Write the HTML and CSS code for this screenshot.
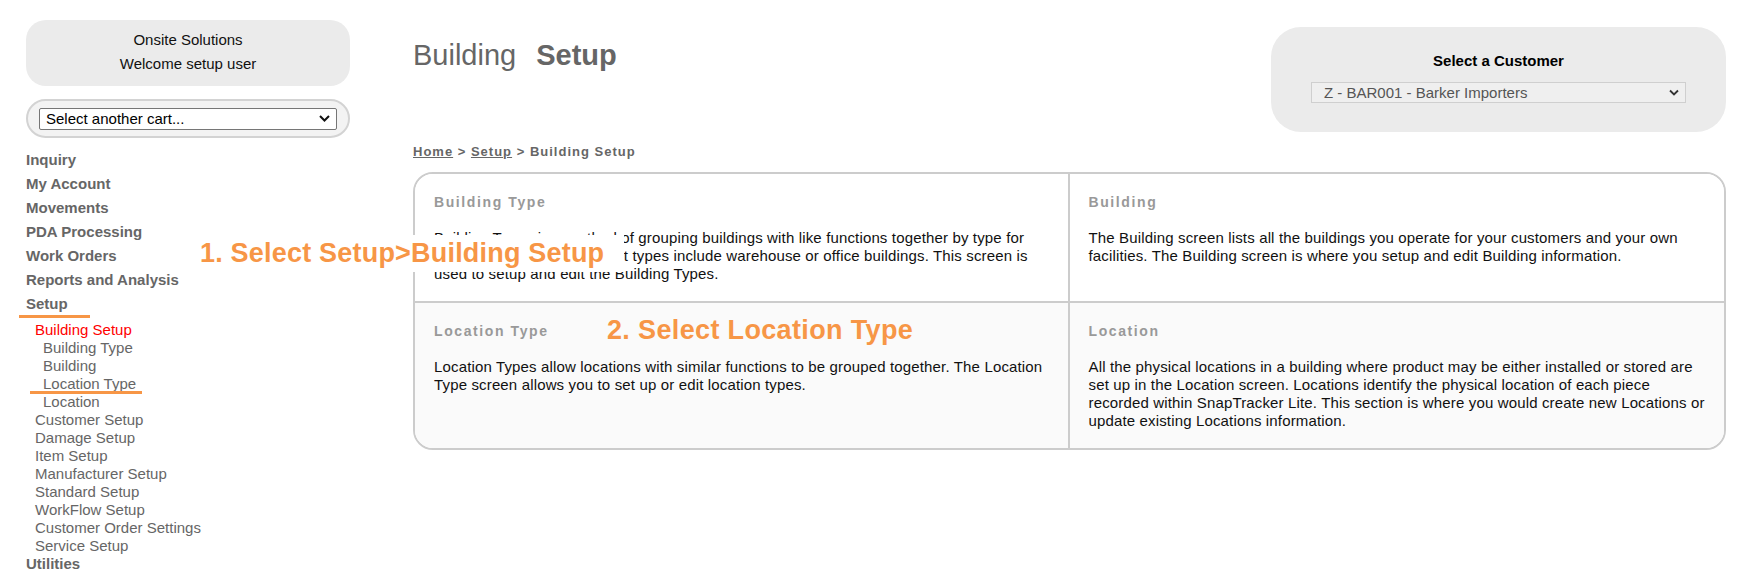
FILE: index.html
```html
<!DOCTYPE html>
<html lang="en">
<head>
<meta charset="utf-8">
<title>Building Setup</title>
<link rel="stylesheet" href="styles.css">
</head>
<body>
<div class="page">
  <aside class="sidebar">
    <div class="welcome">
      <div>Onsite Solutions</div>
      <div>Welcome setup user</div>
    </div>
    <div class="cart">
      <div class="fake-select cart-select">
        <span>Select another cart...</span>
        <svg class="chev" width="11" height="7" viewBox="0 0 11 7"><polyline points="1,1 5.5,5.5 10,1" fill="none" stroke="#111" stroke-width="2"/></svg>
      </div>
    </div>
    <nav class="nav">
      <a class="nav-item">Inquiry</a>
      <a class="nav-item">My Account</a>
      <a class="nav-item">Movements</a>
      <a class="nav-item">PDA Processing</a>
      <a class="nav-item">Work Orders</a>
      <a class="nav-item">Reports and Analysis</a>
      <a class="nav-item">Setup</a>
      <div class="sub">
        <a class="sub-item active">Building Setup</a>
        <a class="sub-item deep">Building Type</a>
        <a class="sub-item deep">Building</a>
        <a class="sub-item deep">Location Type</a>
        <a class="sub-item deep">Location</a>
        <a class="sub-item">Customer Setup</a>
        <a class="sub-item">Damage Setup</a>
        <a class="sub-item">Item Setup</a>
        <a class="sub-item">Manufacturer Setup</a>
        <a class="sub-item">Standard Setup</a>
        <a class="sub-item">WorkFlow Setup</a>
        <a class="sub-item">Customer Order Settings</a>
        <a class="sub-item">Service Setup</a>
      </div>
      <a class="nav-item last">Utilities</a>
    </nav>
  </aside>

  <main class="main">
    <div class="header">
      <h1 class="title">Building<b class="title-bold">Setup</b></h1>
      <div class="customer">
        <div class="customer-label">Select a Customer</div>
        <div class="fake-select customer-select">
          <span>Z - BAR001 - Barker Importers</span>
          <svg class="chev" width="10" height="7" viewBox="0 0 10 7"><polyline points="1,1.5 5,5.5 9,1.5" fill="none" stroke="#333" stroke-width="1.8"/></svg>
        </div>
      </div>
    </div>
    <div class="breadcrumb"><a class="crumb">Home</a> &gt; <a class="crumb">Setup</a> &gt; Building Setup</div>
    <div class="panel">
      <div class="cell top left">
        <h3 class="cell-title">Building Type</h3>
        <p class="cell-text">Building Types is a method of grouping buildings with like functions together by type for reporting purposes. Different types include warehouse or office buildings. This screen is used to setup and edit the Building Types.</p>
      </div>
      <div class="cell top">
        <h3 class="cell-title">Building</h3>
        <p class="cell-text">The Building screen lists all the buildings you operate for your customers and your own facilities. The Building screen is where you setup and edit Building information.</p>
      </div>
      <div class="cell bottom left">
        <h3 class="cell-title">Location Type</h3>
        <p class="cell-text">Location Types allow locations with similar functions to be grouped together. The Location Type screen allows you to set up or edit location types.</p>
      </div>
      <div class="cell bottom">
        <h3 class="cell-title">Location</h3>
        <p class="cell-text">All the physical locations in a building where product may be either installed or stored are set up in the Location screen. Locations identify the physical location of each piece recorded within SnapTracker Lite. This section is where you would create new Locations or update existing Locations information.</p>
      </div>
    </div>
  </main>

  <div class="ann ann1">1. Select Setup&gt;Building Setup</div>
  <div class="ann ann2">2. Select Location Type</div>
  <div class="mark mark1"></div>
  <div class="mark mark2"></div>
</div>
</body>
</html>
```
FILE: styles.css
```css
* { box-sizing: border-box; }
html, body { margin: 0; padding: 0; background: #fff; }
body {
  font-family: "Liberation Sans", Arial, sans-serif;
  font-size: 15px;
  color: #111;
}
.page {
  position: relative;
  display: flex;
  align-items: flex-start;
  padding: 0 24px 0 26px;
  width: 1750px;
  height: 576px;
  overflow: hidden;
}

/* Sidebar */
.sidebar {
  flex: none;
  width: 324px;
  padding-top: 20px;
}
.welcome {
  height: 66px;
  background: #ebebeb;
  border-radius: 20px;
  text-align: center;
  padding: 8px 0 10px;
  line-height: 24px;
  color: #111;
}
.cart {
  margin-top: 13px;
  height: 39px;
  border: 2px solid #d3d3d3;
  border-radius: 20px;
  background: #f3f3f3;
  padding: 0 11px;
  display: flex;
  align-items: center;
}
.fake-select {
  display: flex;
  align-items: center;
  justify-content: space-between;
}
.cart-select {
  width: 298px;
  height: 22px;
  background: #fff;
  border: 1px solid #767676;
  border-radius: 2px;
  padding: 0 6px 0 6px;
  color: #000;
  line-height: 20px;
}
.nav {
  display: flex;
  flex-direction: column;
  padding-top: 7px;
}
.nav-item {
  font-weight: bold;
  color: #666;
  line-height: 18px;
  margin-top: 6px;
}
.nav-item.last { margin-top: 0; }
.sub {
  display: flex;
  flex-direction: column;
  margin-top: 8px;
}
.sub-item {
  color: #666;
  line-height: 18px;
  padding-left: 9px;
}
.sub-item.deep { padding-left: 17px; }
.sub-item.active { color: #ff0000; }

/* Main */
.main {
  flex: 1;
  margin-left: 63px;
  display: flex;
  flex-direction: column;
}
.header {
  display: flex;
  justify-content: space-between;
  align-items: flex-start;
  height: 132px;
}
.title {
  margin: 39px 0 0 0;
  font-size: 29px;
  font-weight: normal;
  color: #666;
  line-height: 33px;
}
.title-bold {
  margin-left: 20px;
  font-weight: bold;
}
.customer {
  margin-top: 27px;
  width: 455px;
  height: 105px;
  background: #ebebeb;
  border-radius: 30px;
  padding-top: 26px;
  text-align: center;
}
.customer-label {
  font-weight: bold;
  line-height: 16px;
  color: #000;
}
.customer-select {
  margin: 13px auto 0;
  width: 375px;
  height: 21px;
  background: #efefef;
  border: 1px solid #cfcfcf;
  padding: 0 6px 0 12px;
  color: #555;
  line-height: 19px;
  text-align: left;
}
.breadcrumb {
  margin-top: 12px;
  font-size: 13px;
  font-weight: bold;
  letter-spacing: 1px;
  line-height: 16px;
  color: #666;
}
.crumb {
  color: #666;
  text-decoration: underline;
}
.panel {
  margin-top: 12px;
  border: 2px solid #cccccc;
  border-radius: 20px;
  overflow: hidden;
  display: grid;
  grid-template-columns: 1fr 1fr;
}
.cell {
  padding: 18px 17px 18px 19px;
}
.cell.left { border-right: 2px solid #cccccc; }
.cell.top { border-bottom: 2px solid #cccccc; background: #fff; }
.cell.bottom { background: #fafafa; }
.cell-title {
  margin: 0 0 17px 0;
  font-size: 14px;
  font-weight: bold;
  letter-spacing: 1.6px;
  line-height: 20px;
  color: #999;
}
.cell-text {
  margin: 0;
  line-height: 18px;
  letter-spacing: 0.15px;
  color: #111;
}

/* Annotations */
.ann {
  position: absolute;
  font-size: 27px;
  font-weight: bold;
  color: #f79646;
  white-space: nowrap;
}
.ann1 {
  left: 188px;
  top: 235px;
  height: 37px;
  line-height: 37px;
  background: #fff;
  padding: 0 20px 0 12px;
  letter-spacing: 0.2px;
}
.ann2 {
  left: 607px;
  top: 317px;
  line-height: 27px;
  letter-spacing: 0.35px;
}
.mark {
  position: absolute;
  height: 3px;
  background: #f79646;
}
.mark1 { left: 19px; top: 315px; width: 71px; }
.mark2 { left: 30px; top: 391px; width: 112px; }
```
